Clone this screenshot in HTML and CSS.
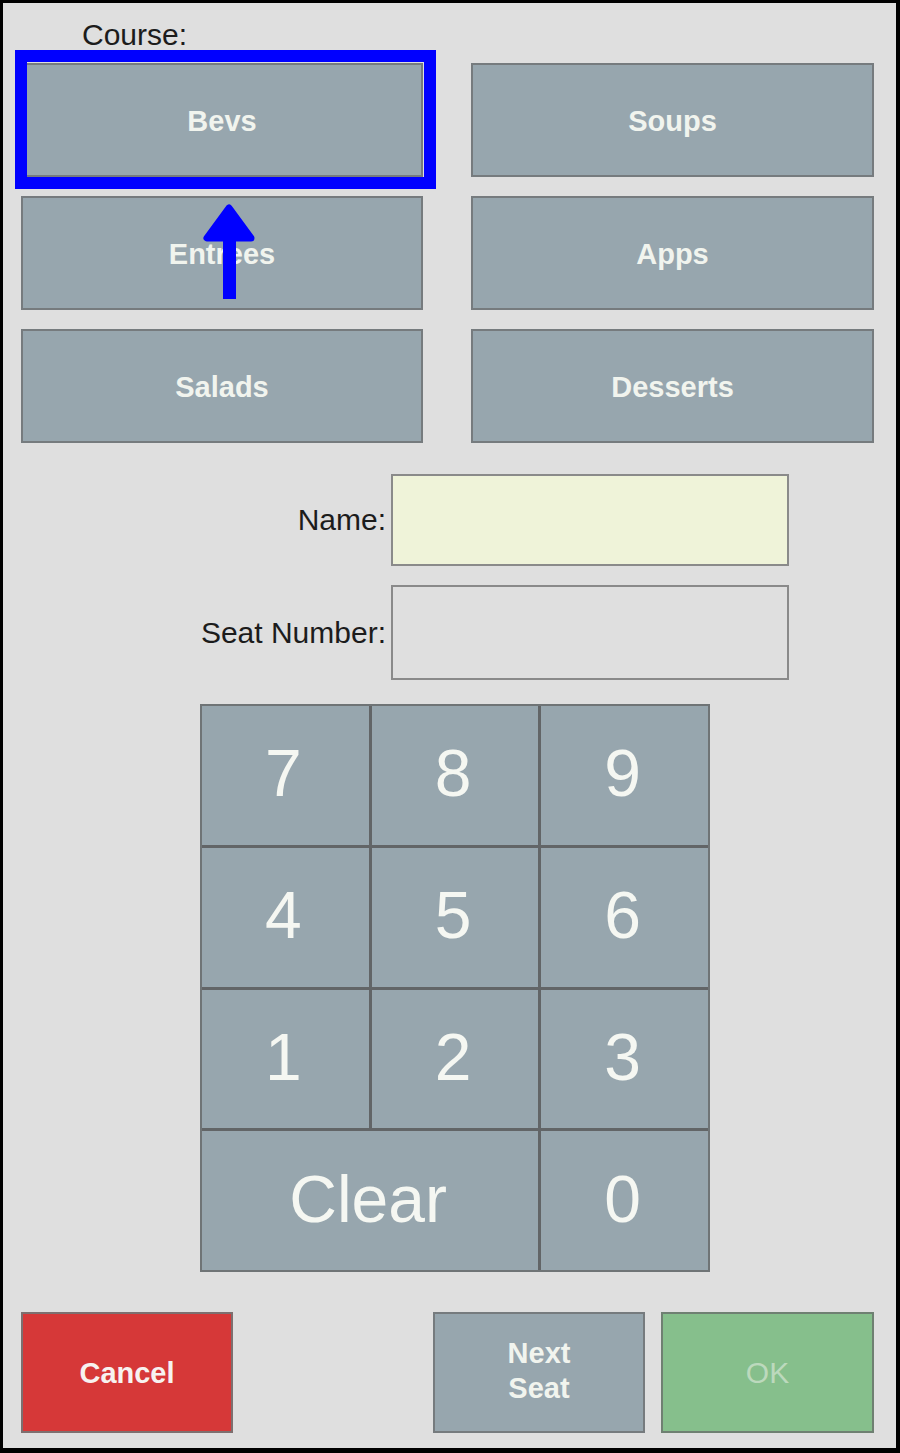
FILE: index.html
```html
<!DOCTYPE html>
<html>
<head>
<meta charset="utf-8">
<link rel="stylesheet" href="styles.css">
</head>
<body>
<div class="frame">
  <div class="course-label">Course:</div>
  <div class="course-grid">
    <button class="btn course">Bevs</button>
    <button class="btn course">Soups</button>
    <button class="btn course">Entrees</button>
    <button class="btn course">Apps</button>
    <button class="btn course">Salads</button>
    <button class="btn course">Desserts</button>
  </div>

  <div class="fields">
    <div class="field-row">
      <label class="field-label">Name:</label>
      <div class="field-box name-box"></div>
    </div>
    <div class="field-row">
      <label class="field-label">Seat Number:</label>
      <div class="field-box seat-box"></div>
    </div>
  </div>

  <div class="keypad">
    <button class="key">7</button>
    <button class="key">8</button>
    <button class="key">9</button>
    <button class="key">4</button>
    <button class="key">5</button>
    <button class="key">6</button>
    <button class="key">1</button>
    <button class="key">2</button>
    <button class="key">3</button>
    <button class="key key-wide">Clear</button>
    <button class="key">0</button>
  </div>

  <div class="actions">
    <button class="btn action cancel">Cancel</button>
    <div class="spacer"></div>
    <button class="btn action next">Next<br>Seat</button>
    <button class="btn action ok">OK</button>
  </div>

  <div class="highlight"></div>
  <svg class="arrow" width="60" height="110" viewBox="0 0 60 110">
    <polygon points="29,8 7,38 51,38" fill="#0000ff" stroke="#0000ff" stroke-width="7" stroke-linejoin="round"/>
    <rect x="23" y="34" width="13" height="65" fill="#0000ff"/>
  </svg>
</div>
</body>
</html>
```

FILE: styles.css
```css
* {
  box-sizing: border-box;
}

html, body {
  margin: 0;
  padding: 0;
  background: #dfdfdf;
}

.frame {
  position: relative;
  width: 900px;
  height: 1453px;
  border-style: solid;
  border-color: #000;
  border-width: 3px 4px 5px 3px;
  background: #dfdfdf;
  padding: 17px 22px 0 18px;
  font-family: "Liberation Sans", Arial, sans-serif;
}

.course-label {
  margin-left: 61px;
  font-size: 30px;
  line-height: 30px;
  color: #1c1c1c;
  height: 30px;
}

.course-grid {
  margin-top: 13px;
  display: grid;
  grid-template-columns: 402px 403px;
  grid-auto-rows: 114px;
  column-gap: 48px;
  row-gap: 19px;
}

.btn {
  font-family: "Liberation Sans", Arial, sans-serif;
  font-weight: bold;
  font-size: 29px;
  color: #f1f4ee;
  background: #97a6ae;
  border: 2px solid #767b7e;
  margin: 0;
  padding: 0;
  cursor: pointer;
}

.course {
  padding-top: 3px;
}

.fields {
  margin-top: 31px;
  display: flex;
  flex-direction: column;
  gap: 19px;
}

.field-row {
  display: flex;
  align-items: center;
  gap: 5px;
}

.field-label {
  width: 365px;
  text-align: right;
  font-size: 30px;
  color: #1c1c1c;
}

.field-box {
  width: 398px;
  border: 2px solid #8a8a8a;
}

.name-box {
  height: 92px;
  background: #eff3d9;
}

.seat-box {
  height: 95px;
  background: #dfdfdf;
}

.keypad {
  margin-top: 24px;
  margin-left: 179px;
  width: 510px;
  height: 568px;
  display: grid;
  grid-template-columns: repeat(3, 1fr);
  grid-template-rows: repeat(4, 1fr);
  gap: 3px;
  background: #626567;
  border: 2px solid #6f7476;
}

.key {
  font-family: "Liberation Sans", Arial, sans-serif;
  font-size: 66px;
  font-weight: normal;
  color: #f5f7f2;
  background: #97a6ae;
  border: none;
  margin: 0;
  padding: 0 4px 4px 0;
}

.key-wide {
  grid-column: span 2;
}

.actions {
  margin-top: 40px;
  display: flex;
  gap: 16px;
  height: 121px;
}

.spacer {
  flex: 1;
}

.action {
  width: 212px;
  height: 121px;
  line-height: 35px;
}

.cancel {
  background: #d63838;
  border-color: #7d6f6f;
  color: #f7f2f0;
  padding-top: 2px;
}

.next {
  width: 212px;
  padding-bottom: 4px;
}

.ok {
  width: 213px;
  background: #86bf8c;
  border-color: #6f8072;
  color: #bcd9bd;
  font-weight: normal;
  font-size: 30px;
}

.highlight {
  position: absolute;
  left: 12px;
  top: 47px;
  width: 421px;
  height: 139px;
  border: 12px solid #0000ff;
}

.arrow {
  position: absolute;
  left: 197px;
  top: 197px;
}
```
